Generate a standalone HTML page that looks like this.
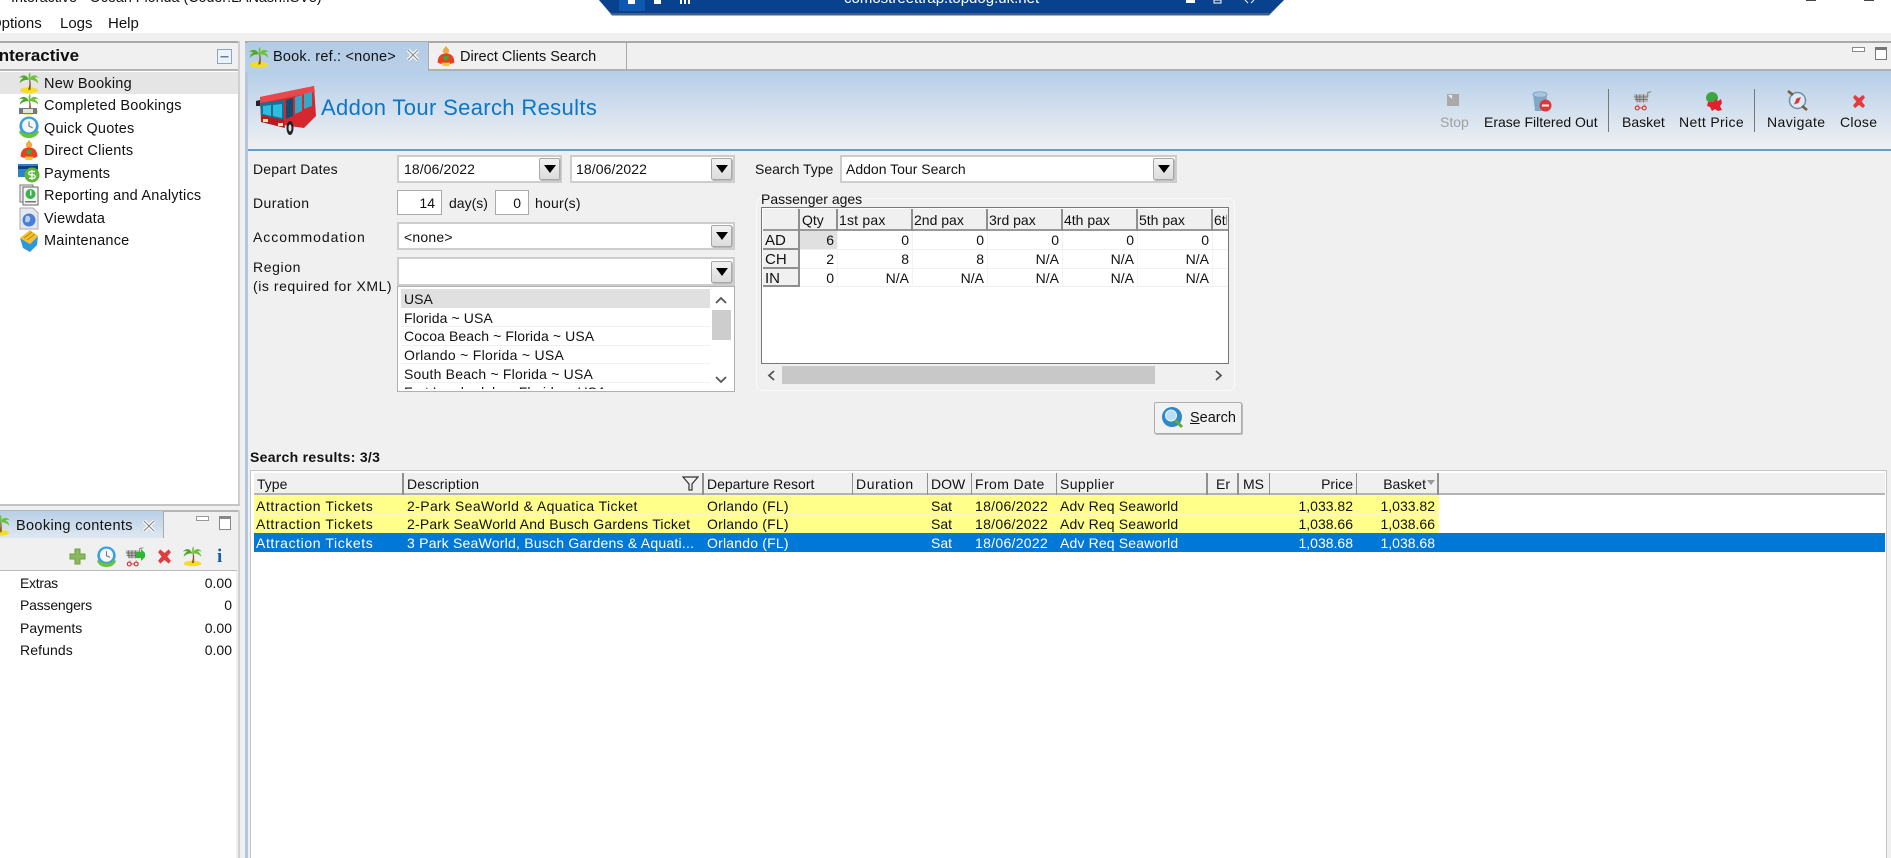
<!DOCTYPE html>
<html><head><meta charset="utf-8"><title>Interactive</title>
<style>
html,body{margin:0;padding:0;background:#fff}
#p{position:relative;width:1891px;height:858px;overflow:hidden;background:#f0f0f0;font:14px/18px "Liberation Sans",sans-serif;color:#111;filter:blur(.35px)}
#p div,#p svg,#p span.t{position:absolute}
.t{white-space:nowrap;position:absolute}
.r{transform:translateX(-100%)}
.n{font-size:14.5px;letter-spacing:.22px}
.c{background:#fff;border:2px solid #cdcdcd;box-sizing:border-box}
.b{background:linear-gradient(#f2f2f2,#dcdcdc);border:1px solid #a8a8a8;border-radius:2px;box-sizing:border-box;box-shadow:1px 1px 0 #bbb}
.b:after{content:"";position:absolute;left:4px;top:6px;border:6px solid transparent;border-top:8px solid #000;border-bottom:0}
.h{background:#f0f0f0;border-right:2px solid #8f8f8f;border-bottom:2px solid #8f8f8f;box-sizing:border-box}
.s{width:1.5px;height:22px;top:473px;background:#909090}
.ps{width:1.5px;height:22px;top:209px;background:#8f8f8f}
.pv{width:1px;height:56px;top:231px;background:#f3f3f3}
.a{letter-spacing:.6px}.d1{letter-spacing:.4px}.d2{letter-spacing:.2px}.d3{letter-spacing:.23px}.o{letter-spacing:.2px}.f{letter-spacing:.3px}.q{letter-spacing:.15px}
.w{color:#fff}
</style></head><body>
<svg width="0" height="0" style="position:absolute">
<defs>
<symbol id="palm" viewBox="0 0 24 24"><ellipse cx="12" cy="20.500" rx="10" ry="3.200" fill="#f5dc28"/><path d="M12 9c1 4 0 8-1 11h2.600c.6-4 .6-8-.4-11z" fill="#8a5a22"/><path d="M12 9C9 3 5 3 1 7c3-1 4-.5 5 0-2 1-4 3-4 6 2-3 6-4 10-4z" fill="#4fa82b"/><path d="M12 9c3-6 7-6 11-2-3-1-4-.5-5 0 2 1 4 3 4 6-2-3-6-4-10-4zM12 9c-1-4 0-7 1-8 1 2 1 5-1 8z" fill="#6cc03a"/></symbol>
<symbol id="person" viewBox="0 0 24 24"><circle cx="12" cy="6" r="3.800" fill="#f0a848"/><path d="M12 0l2.500 3.500h-5z" fill="#e8a52c"/><path d="M2 20c0-7 3-11 10-11s10 4 10 11c-4 2.500-16 2.500-20 0z" fill="#ee3d20"/><rect x="9" y="12" width="6" height="5" fill="#3fa53c"/><path d="M7 20h10l-1 4H8z" fill="#f3c63a"/></symbol>
<symbol id="clock" viewBox="0 0 24 24"><circle cx="12" cy="11" r="10.500" fill="#3aa0e0"/><circle cx="12" cy="10.500" r="7.500" fill="#f6f6f6"/><path d="M12 6v5l4 2" stroke="#777" fill="none" stroke-width="1.200"/><path d="M3 16c4 5 14 5 18 0l2 1c-2 5-6 7-11 7s-9-2-11-7z" fill="#67c23c"/></symbol>
<symbol id="x" viewBox="0 0 24 24"><path d="M3 6l3-4 6 5 6-5 3 4-5 6 5 6-3 4-6-5-6 5-3-4 5-6z" fill="#e33b3e"/></symbol>
<symbol id="cart" viewBox="0 0 24 24"><path d="M2 5h16v9H5z" fill="#b5b5b5"/><path d="M5 5l1 9M9 5v9M13 5v9M2 8h16M3 11h15" stroke="#666" fill="none" stroke-width=".9"/><path d="M18 8V3l4-1" stroke="#888" fill="none" stroke-width="1.300"/><path d="M7 16v2M14 16v2" stroke="#aaa"/><circle cx="6" cy="20.500" r="2.200" fill="none" stroke="#d83030" stroke-width="1.300"/><circle cx="14" cy="20.500" r="2.200" fill="none" stroke="#d83030" stroke-width="1.300"/><path d="M8 20.500h4" stroke="#d83030"/></symbol>
</defs>
</svg>
<div id="p">
<!-- top -->
<div style="left:0;top:0;width:1891px;height:33px;background:#fff"></div>
<span class="t" style="left:11px;top:-11px;font-size:14.3px">Interactive - Ocean Florida (Coder:LANash:ISV5)</span>
<span class="t" style="left:-10px;top:15px;font-size:15px">Options</span>
<span class="t" style="left:60px;top:15px;font-size:15px">Logs</span>
<span class="t" style="left:108px;top:15px;font-size:15px">Help</span>
<svg style="left:590px;top:0" width="710" height="17"><path d="M9 0L22 15.500H679L694 0z" fill="#3c5f8c"/><path d="M9 0L21 13H680L694 0z" fill="#08428f"/><rect x="29" y="0" width="26" height="11" fill="#0f58b0"/><rect x="38" y="0" width="7" height="4" fill="#fff"/><rect x="64" y="0" width="7" height="4" fill="#fff"/><rect x="90" y="0" width="2" height="4" fill="#fff"/><rect x="94" y="0" width="2" height="4" fill="#fff"/><rect x="98" y="0" width="2" height="4" fill="#fff"/><rect x="596" y="0" width="9" height="3" fill="#fff"/><rect x="624" y="0" width="7" height="3" fill="none" stroke="#fff"/><path d="M655 0l3 3M664 0l-3 3" stroke="#fff"/></svg>
<span class="t" style="left:844px;top:-10px;font-size:15px;color:#fff">comostreettrap.topdog.uk.net</span>
<div style="left:1806px;top:0;width:10px;height:1px;background:#444"></div>
<div style="left:1864px;top:0;width:10px;height:1px;background:#444"></div>

<!-- left panel -->
<div style="left:0;top:41px;width:239px;height:2px;background:#a9a9a9"></div>
<div style="left:0;top:43px;width:238px;height:26px;background:#f0f0f0;border-bottom:2px solid #b5b5b5"></div>
<span class="t" style="left:-6px;top:46.5px;font-size:17px;font-weight:bold">Interactive</span>
<svg style="left:216px;top:48px" width="17" height="17"><rect x="1.500" y="1.500" width="14" height="14" fill="#eef2f8" stroke="#8aa6c6"/><rect x="4.500" y="8" width="8" height="1.500" fill="#5a7fae"/></svg>
<div style="left:0;top:71px;width:238px;height:433px;background:#fff"></div>
<div style="left:238px;top:41px;width:1.500px;height:465px;background:#cfcfcf"></div>
<div style="left:0;top:504px;width:239.500px;height:2px;background:#c4c4c4"></div>
<div style="left:0;top:72px;width:238px;height:22px;background:#e5e5e5"></div>
<svg style="left:18px;top:71px" width="22" height="23"><use href="#palm"/></svg>
<svg style="left:18px;top:93px" width="22" height="22"><use href="#palm"/><rect x="1" y="15" width="18" height="6" fill="#777"/><rect x="5" y="16" width="10" height="4" fill="#e2e2e2"/></svg>
<svg style="left:18px;top:116px" width="22" height="22"><use href="#clock"/></svg>
<svg style="left:19px;top:139px" width="20" height="22"><use href="#person"/></svg>
<svg style="left:18px;top:162px" width="22" height="22"><rect x="0" y="2" width="20" height="13" fill="#2d83c8"/><rect x="0" y="4" width="20" height="3" fill="#123f78"/><circle cx="14" cy="13" r="7.500" fill="#5fb53a"/><path d="M17 9.500h-4.500a1.700 1.700 0 000 3.400h3a1.700 1.700 0 010 3.400H11M14 8v10" stroke="#fff" fill="none" stroke-width="1.300"/></svg>
<svg style="left:19px;top:184px" width="20" height="22"><rect x="1" y="1" width="13" height="17" fill="#eee" stroke="#777"/><rect x="4" y="3" width="15" height="18" fill="#f5f5f5" stroke="#666"/><circle cx="11.500" cy="10" r="5" fill="#38b548"/><rect x="11" y="6.500" width="1.400" height="5" fill="#fff"/><rect x="6" y="17" width="11" height="1.500" fill="#777"/></svg>
<svg style="left:19px;top:207px" width="20" height="23"><path d="M1 1h13l5 5v16H1z" fill="#e6e8ee" stroke="#a8a8b4"/><circle cx="10" cy="13" r="6.500" fill="#4a7fd8"/><path d="M7 9c3-1 5 1 4 4s-4 3-5 1z" fill="#b4d0f4"/></svg>
<svg style="left:19px;top:229px" width="20" height="23"><path d="M1 9l3 10 7 4 7-7 1-9-8 8z" fill="#2c98d8"/><path d="M1 9l10-8 8 6-8 8z" fill="#f4c02e"/><path d="M5 9l8-6M8 11l8-6" stroke="#b8861a"/></svg>
<span class="t n" style="left:44px;top:75px">New Booking</span>
<span class="t n" style="left:44px;top:97px">Completed Bookings</span>
<span class="t n" style="left:44px;top:119.5px">Quick Quotes</span>
<span class="t n" style="left:44px;top:142px">Direct Clients</span>
<span class="t n" style="left:44px;top:164.5px">Payments</span>
<span class="t n" style="left:44px;top:187px">Reporting and Analytics</span>
<span class="t n" style="left:44px;top:209.5px">Viewdata</span>
<span class="t n" style="left:44px;top:232px">Maintenance</span>

<!-- booking contents -->
<div style="left:0;top:510px;width:239px;height:348px;background:#f0f0f0"></div>
<div style="left:0;top:510px;width:239px;height:1.500px;background:#b5b5b5"></div>
<div style="left:238px;top:510px;width:1.500px;height:348px;background:#cfcfd6"></div>
<div style="left:0;top:511px;width:163px;height:27px;background:linear-gradient(#b8cfe6,#dfe8f2);border-right:1px solid #aaa"></div>
<div style="left:0;top:538px;width:237px;height:32px;background:#f0f0f0;border-bottom:1px solid #bbb"></div>
<svg style="left:0;top:514px" width="11" height="22"><use href="#palm" x="-11" width="22" height="22"/></svg>
<span class="t" style="left:16px;top:517px;font-size:14.5px;letter-spacing:.35px">Booking contents</span>
<svg style="left:142px;top:519px" width="14" height="14"><path d="M2 2l10 10M12 2L2 12" stroke="#fff" stroke-width="3.500"/><path d="M2 2l10 10M12 2L2 12" stroke="#888" stroke-width="1.200"/></svg>
<div style="left:196px;top:516px;width:11px;height:3px;border:1px solid #999;background:#fff"></div>
<div style="left:219px;top:516px;width:10px;height:10px;border:1px solid #888;border-top-width:3px;background:#fff"></div>
<svg style="left:69px;top:548px" width="17" height="17"><path d="M6 1h5v5h5v5h-5v5H6v-5H1V6h5z" fill="#8cb85c" stroke="#6d9f4a"/></svg>
<svg style="left:96px;top:546px" width="21" height="21"><use href="#clock"/></svg>
<svg style="left:124px;top:546px" width="21" height="21"><use href="#cart"/><path d="M12 6h5V3l6 6-6 6v-3h-5z" fill="#2fb52f"/></svg>
<svg style="left:156px;top:548px" width="17" height="17"><use href="#x"/></svg>
<svg style="left:182px;top:545px" width="21" height="22"><use href="#palm"/></svg>
<span class="t" style="left:217px;top:547px;font:bold 19px/20px 'Liberation Serif',serif;color:#1a5ca8">i</span>
<div style="left:0;top:571px;width:236px;height:287px;background:#fff"></div>
<span class="t" style="left:20px;top:573.5px;letter-spacing:-.3px">Extras</span><span class="t r" style="left:232px;top:573.5px">0.00</span>
<span class="t" style="left:20px;top:596px;letter-spacing:-.2px">Passengers</span><span class="t r" style="left:232px;top:596px">0</span>
<span class="t" style="left:20px;top:618.5px">Payments</span><span class="t r" style="left:232px;top:618.5px">0.00</span>
<span class="t" style="left:20px;top:641px;letter-spacing:.1px">Refunds</span><span class="t r" style="left:232px;top:641px">0.00</span>

<!-- editor -->
<div style="left:245px;top:41px;width:1646px;height:2px;background:#a9a9a9"></div>
<div style="left:245px;top:69px;width:1646px;height:2px;background:#b0b0b0"></div>
<div style="left:245px;top:43px;width:3px;height:815px;background:#b4c6dc"></div>
<div style="left:245px;top:42px;width:183px;height:30px;background:linear-gradient(#b2cbe6,#bad0e8);border-radius:5px 0 0 0"></div>
<div style="left:428px;top:42px;width:1px;height:28px;background:#aaa"></div>
<div style="left:626px;top:42px;width:1px;height:28px;background:#aaa"></div>
<svg style="left:248px;top:45px" width="22" height="24"><use href="#palm"/></svg>
<span class="t" style="left:273px;top:48px;font-size:14.5px;letter-spacing:.2px">Book. ref.: &lt;none&gt;</span>
<svg style="left:406px;top:48px" width="14" height="14"><path d="M2 2l10 10M12 2L2 12" stroke="#fff" stroke-width="3.500"/><path d="M2 2l10 10M12 2L2 12" stroke="#888" stroke-width="1.200"/></svg>
<svg style="left:436px;top:45px" width="20" height="22"><use href="#person"/></svg>
<span class="t" style="left:460px;top:48px;font-size:14.5px">Direct Clients Search</span>
<div style="left:1852px;top:47px;width:11px;height:3px;border:1px solid #888;background:#fff"></div>
<div style="left:1875px;top:47px;width:10px;height:9px;border:1px solid #777;border-top-width:3px;background:#fff"></div>

<div style="left:248px;top:71px;width:1643px;height:78px;background:linear-gradient(#b5cee8,#f0f1f3)"></div>
<div style="left:248px;top:149px;width:1643px;height:2px;background:#659fc8"></div>
<svg style="left:254px;top:84px" width="63" height="52" viewBox="0 0 63 52">
<path d="M6 13L60 2l2 30-12 12L7 38z" fill="#d5272e"/><path d="M6 13L60 2l1 6L7 19z" fill="#e8484c"/>
<path d="M6 19l24-3v20L7 31z" fill="#1b6f96"/><path d="M9 22l8-1v11l-8-2zM19 21l9-1v14l-9-2z" fill="#2bbede"/><path d="M32 16l7-2v18l-7 3z" fill="#124d70"/><path d="M41 13l7-2v16l-7 3zM50 10l8-2v14l-8 3z" fill="#35a8c8"/>
<path d="M7 31l23 5 1 8-24-6z" fill="#b51c22"/><rect x="9" y="35" width="5" height="3" fill="#f1e6b0"/><rect x="24" y="39" width="5" height="3" fill="#f1e6b0"/>
<ellipse cx="36" cy="44" rx="3.500" ry="7" fill="#222"/><ellipse cx="36" cy="44" rx="1.500" ry="3.500" fill="#ddd"/><path d="M2 17l4-1v6H2z" fill="#222"/></svg>
<span class="t" style="left:321px;top:96px;font-size:22px;line-height:24px;color:#0c76c6;letter-spacing:.35px">Addon Tour Search Results</span>

<!-- toolbar -->
<svg style="left:1447px;top:94px" width="12" height="12"><rect width="12" height="12" fill="#a9a9a9"/><path d="M1 1h4v4z" fill="#eee"/></svg>
<span class="t" style="left:1440px;top:113px;color:#a0a0a0">Stop</span>
<svg style="left:1532px;top:91px" width="20" height="21"><path d="M1 3h14l-1 17H3z" fill="#7fa8c8"/><ellipse cx="8" cy="3.500" rx="7" ry="2.800" fill="#a9c6da" stroke="#7fa8c8"/><circle cx="13.500" cy="14.500" r="6" fill="#d83a3a"/><rect x="10" y="13.500" width="7" height="2" fill="#fff"/></svg>
<span class="t" style="left:1484px;top:113px">Erase Filtered Out</span>
<div style="left:1608px;top:89px;width:1px;height:43px;background:#777"></div>
<svg style="left:1632px;top:90px" width="21" height="21"><use href="#cart"/></svg>
<span class="t" style="left:1622px;top:113px">Basket</span>
<svg style="left:1701px;top:90px" width="21" height="21"><path d="M5 8a6 6 0 0112 0c0 4-6 6-6 6S5 12 5 8z" fill="#3fa544"/><path d="M7 12h6l1-3 3 2 3-2 1 4-2 3 2 4-4 1-3-2-3 2-2-4-3-1z" fill="#e3202c"/></svg>
<span class="t" style="left:1679px;top:113px;letter-spacing:.35px">Nett Price</span>
<div style="left:1754px;top:89px;width:1px;height:43px;background:#777"></div>
<svg style="left:1787px;top:90px" width="21" height="21"><circle cx="10.500" cy="10.500" r="8" fill="#dfeaf3" stroke="#6d8ca8" stroke-width="1.500"/><path d="M14 7l-2.500 6L7 14.500 9.500 8.500z" fill="#d8383a"/><path d="M1 1l5 4M20 20l-5-4" stroke="#7a5a38" stroke-width="2.500"/></svg>
<span class="t" style="left:1767px;top:113px;letter-spacing:.4px">Navigate</span>
<svg style="left:1851px;top:93px" width="16" height="17"><use href="#x"/></svg>
<span class="t" style="left:1840px;top:113px;letter-spacing:.3px">Close</span>

<!-- form -->
<span class="t" style="left:253px;top:160px;letter-spacing:.2px">Depart Dates</span>
<div class="c" style="left:397px;top:155px;width:165px;height:28px"></div><span class="t" style="left:404px;top:160px;letter-spacing:.1px">18/06/2022</span><div class="b" style="left:539px;top:158px;width:21px;height:22px"></div>
<div class="c" style="left:570px;top:155px;width:165px;height:28px"></div><span class="t" style="left:576px;top:160px;letter-spacing:.1px">18/06/2022</span><div class="b" style="left:711px;top:158px;width:21px;height:22px"></div>
<span class="t" style="left:755px;top:160px">Search Type</span>
<div class="c" style="left:840px;top:155px;width:337px;height:28px"></div><span class="t" style="left:846px;top:160px">Addon Tour Search</span><div class="b" style="left:1153px;top:158px;width:21px;height:22px"></div>

<span class="t" style="left:253px;top:194px;letter-spacing:.45px">Duration</span>
<div class="c" style="left:397px;top:190px;width:45px;height:25px;border-color:#aaa;border-width:1.500px"></div><span class="t r" style="left:435px;top:194px">14</span>
<span class="t" style="left:449px;top:194px">day(s)</span>
<div class="c" style="left:495px;top:190px;width:34px;height:25px;border-color:#aaa;border-width:1.500px"></div><span class="t r" style="left:521px;top:194px">0</span>
<span class="t" style="left:535px;top:194px;letter-spacing:.2px">hour(s)</span>

<span class="t" style="left:253px;top:228px;letter-spacing:.95px">Accommodation</span>
<div class="c" style="left:397px;top:222px;width:338px;height:28px"></div><span class="t" style="left:404px;top:228px;letter-spacing:.2px">&lt;none&gt;</span><div class="b" style="left:711px;top:225px;width:21px;height:22px"></div>

<span class="t" style="left:253px;top:258px;letter-spacing:.6px">Region</span>
<span class="t" style="left:253px;top:277px;letter-spacing:.55px">(is required for XML)</span>
<div class="c" style="left:397px;top:257px;width:338px;height:29px"></div><div class="b" style="left:711px;top:261px;width:21px;height:22px"></div>
<div style="left:397px;top:286px;width:338px;height:106px;background:#fff;border:1.500px solid #b0b0b0;box-sizing:border-box;overflow:hidden">
<div style="left:3px;top:2px;width:309px;height:19px;background:#e0e0e0"></div>
<div style="left:3px;top:39px;width:309px;height:1px;background:#f0f0f0"></div>
<div style="left:3px;top:58px;width:309px;height:1px;background:#f0f0f0"></div>
<div style="left:3px;top:76px;width:309px;height:1px;background:#f0f0f0"></div>
<div style="left:3px;top:95px;width:309px;height:1px;background:#f0f0f0"></div>
<span class="t" style="left:6px;top:3px">USA</span>
<span class="t" style="left:6px;top:22px;letter-spacing:.1px">Florida ~ USA</span>
<span class="t" style="left:6px;top:40px;letter-spacing:.1px">Cocoa Beach ~ Florida ~ USA</span>
<span class="t" style="left:6px;top:59px;letter-spacing:.3px">Orlando ~ Florida ~ USA</span>
<span class="t" style="left:6px;top:78px;letter-spacing:.2px">South Beach ~ Florida ~ USA</span>
<span class="t" style="left:6px;top:95.5px">Fort Lauderdale ~ Florida ~ USA</span>
<div style="left:0;top:102px;width:335px;height:2px;background:#fff"></div>
<div style="left:313px;top:0;width:22px;height:104px;background:#fff"></div>
<div style="left:314px;top:23px;width:19px;height:30px;background:#cdcdcd"></div>
<svg style="left:316px;top:9px" width="14" height="9"><path d="M2 7l5-5 5 5" fill="none" stroke="#555" stroke-width="1.800"/></svg>
<svg style="left:316px;top:88px" width="14" height="9"><path d="M2 2l5 5 5-5" fill="none" stroke="#555" stroke-width="1.800"/></svg>
</div>

<!-- passenger ages -->
<div style="left:756px;top:198px;width:479px;height:193px;border:1.500px solid #fafafa;border-radius:6px;box-sizing:border-box"></div>
<span class="t" style="left:761px;top:191px;background:#f0f0f0;line-height:17px;height:14px">Passenger ages</span>
<div style="left:761px;top:207px;width:468px;height:157px;background:#fff;border:1.500px solid #777;box-sizing:border-box"></div>
<div style="left:763px;top:209px;width:465px;height:22px;background:#f0f0f0;border-bottom:2px solid #999;box-sizing:border-box"></div>
<div class="ps" style="left:798px;width:2px"></div>
<div class="ps" style="left:836px"></div><div class="ps" style="left:911px"></div><div class="ps" style="left:986px"></div><div class="ps" style="left:1061px"></div><div class="ps" style="left:1136px"></div><div class="ps" style="left:1211px"></div>
<div class="h" style="left:763px;top:231px;width:37px;height:19px"></div>
<div class="h" style="left:763px;top:250px;width:37px;height:18.5px"></div>
<div class="h" style="left:763px;top:268.5px;width:37px;height:18.5px"></div>
<div style="left:800px;top:231px;width:36.500px;height:18px;background:#e0e0e0"></div>
<div style="left:800px;top:249px;width:428px;height:1px;background:#f0f0f0"></div>
<div style="left:800px;top:268px;width:428px;height:1px;background:#f0f0f0"></div>
<div style="left:800px;top:286px;width:428px;height:1px;background:#f0f0f0"></div>
<div class="pv" style="left:836.5px"></div><div class="pv" style="left:911.5px"></div><div class="pv" style="left:986.5px"></div><div class="pv" style="left:1061.5px"></div><div class="pv" style="left:1136.5px"></div><div class="pv" style="left:1211.5px"></div>
<span class="t" style="left:802px;top:211px">Qty</span><span class="t" style="left:839px;top:211px;letter-spacing:.2px">1st pax</span><span class="t" style="left:914px;top:211px">2nd pax</span><span class="t" style="left:989px;top:211px">3rd pax</span><span class="t" style="left:1064px;top:211px">4th pax</span><span class="t" style="left:1139px;top:211px">5th pax</span><span class="t" style="left:1214px;top:211px;width:13px;overflow:hidden">6th pax</span>
<span class="t" style="left:765px;top:232px;font-size:15px">AD</span><span class="t" style="left:765px;top:251px;font-size:15px">CH</span><span class="t" style="left:765px;top:269.5px;font-size:15px">IN</span>
<span class="t r" style="left:834px;top:231px">6</span><span class="t r" style="left:909px;top:231px">0</span><span class="t r" style="left:984px;top:231px">0</span><span class="t r" style="left:1059px;top:231px">0</span><span class="t r" style="left:1134px;top:231px">0</span><span class="t r" style="left:1209px;top:231px">0</span>
<span class="t r" style="left:834px;top:250px">2</span><span class="t r" style="left:909px;top:250px">8</span><span class="t r" style="left:984px;top:250px">8</span><span class="t r" style="left:1059px;top:250px">N/A</span><span class="t r" style="left:1134px;top:250px">N/A</span><span class="t r" style="left:1209px;top:250px">N/A</span>
<span class="t r" style="left:834px;top:268.5px">0</span><span class="t r" style="left:909px;top:268.5px">N/A</span><span class="t r" style="left:984px;top:268.5px">N/A</span><span class="t r" style="left:1059px;top:268.5px">N/A</span><span class="t r" style="left:1134px;top:268.5px">N/A</span><span class="t r" style="left:1209px;top:268.5px">N/A</span>
<div style="left:782px;top:366px;width:373px;height:18px;background:#c8c8c8"></div>
<svg style="left:766px;top:369px" width="10" height="13"><path d="M8 2L3 6.500 8 11" fill="none" stroke="#555" stroke-width="1.800"/></svg>
<svg style="left:1214px;top:369px" width="10" height="13"><path d="M2 2l5 4.500L2 11" fill="none" stroke="#555" stroke-width="1.800"/></svg>

<!-- search btn -->
<div style="left:1154px;top:402px;width:88px;height:32px;background:#f2f2f2;border:1px solid #adadad;border-radius:2px;box-sizing:border-box;box-shadow:1px 1px 0 #bbb"></div>
<svg style="left:1161px;top:406px" width="24" height="23"><circle cx="11" cy="11" r="10" fill="#2f88c8"/><circle cx="10" cy="9.500" r="5.500" fill="#b9dff2" stroke="#e8f4fa"/><path d="M14 14l7 7" stroke="#6aa53a" stroke-width="3"/></svg>
<span class="t" style="left:1190px;top:409px;font-size:14.5px"><u>S</u>earch</span>

<!-- results -->
<span class="t" style="left:250px;top:448px;font-weight:bold;font-size:14px;letter-spacing:.3px">Search results: 3/3</span>
<div style="left:250px;top:470px;width:1637px;height:388px;background:#fff;border:1.500px solid #c6c6c6;border-bottom:0;box-sizing:border-box"></div>
<div style="left:254px;top:473px;width:1631px;height:22px;background:#f0f0f0;border-bottom:2px solid #b4b4b4;box-sizing:border-box"></div>
<div style="left:254px;top:494.5px;width:1184.500px;height:38.5px;background:#ffff8a"></div>
<div style="left:254px;top:514px;width:1184.500px;height:1px;background:#f6f6c8"></div>
<div style="left:254px;top:533px;width:1631px;height:19px;background:#0078d7"></div>
<div class="s" style="left:402px"></div><div class="s" style="left:702px"></div><div class="s" style="left:851.5px"></div><div class="s" style="left:926.5px"></div><div class="s" style="left:970.5px"></div><div class="s" style="left:1055.5px"></div><div class="s" style="left:1206px"></div><div class="s" style="left:1237px"></div><div class="s" style="left:1268.5px"></div><div class="s" style="left:1355.5px"></div><div class="s" style="left:1437px"></div>
<span class="t" style="left:257px;top:475px">Type</span><span class="t" style="left:407px;top:475px;letter-spacing:.2px">Description</span><span class="t" style="left:707px;top:475px">Departure Resort</span><span class="t" style="left:856px;top:475px;letter-spacing:.6px">Duration</span><span class="t" style="left:931px;top:475px">DOW</span><span class="t" style="left:975px;top:475px;letter-spacing:.4px">From Date</span><span class="t" style="left:1060px;top:475px;letter-spacing:.4px">Supplier</span><span class="t" style="left:1216px;top:475px">Er</span><span class="t" style="left:1243px;top:475px">MS</span><span class="t r" style="left:1353px;top:475px">Price</span><span class="t r" style="left:1426px;top:475px">Basket</span>
<svg style="left:682px;top:476px" width="17" height="15"><path d="M1 1h15l-6 7v6H7V8z" fill="none" stroke="#333" stroke-width="1.200"/></svg>
<svg style="left:1426px;top:480px" width="10" height="6"><path d="M1 0h8L5 5z" fill="#999"/></svg>
<span class="t a" style="left:256px;top:497px">Attraction Tickets</span><span class="t d1" style="left:407px;top:497px">2-Park SeaWorld &amp; Aquatica Ticket</span><span class="t o" style="left:707px;top:497px">Orlando (FL)</span><span class="t" style="left:931px;top:497px">Sat</span><span class="t f" style="left:975px;top:497px">18/06/2022</span><span class="t q" style="left:1060px;top:497px">Adv Req Seaworld</span><span class="t r" style="left:1353px;top:497px">1,033.82</span><span class="t r" style="left:1435px;top:497px">1,033.82</span>
<span class="t a" style="left:256px;top:515px">Attraction Tickets</span><span class="t d2" style="left:407px;top:515px">2-Park SeaWorld And Busch Gardens Ticket</span><span class="t o" style="left:707px;top:515px">Orlando (FL)</span><span class="t" style="left:931px;top:515px">Sat</span><span class="t f" style="left:975px;top:515px">18/06/2022</span><span class="t q" style="left:1060px;top:515px">Adv Req Seaworld</span><span class="t r" style="left:1353px;top:515px">1,038.66</span><span class="t r" style="left:1435px;top:515px">1,038.66</span>
<span class="t a w" style="left:256px;top:534px">Attraction Tickets</span><span class="t d3 w" style="left:407px;top:534px">3 Park SeaWorld, Busch Gardens &amp; Aquati...</span><span class="t o w" style="left:707px;top:534px">Orlando (FL)</span><span class="t w" style="left:931px;top:534px">Sat</span><span class="t f w" style="left:975px;top:534px">18/06/2022</span><span class="t q w" style="left:1060px;top:534px">Adv Req Seaworld</span><span class="t r w" style="left:1353px;top:534px">1,038.68</span><span class="t r w" style="left:1435px;top:534px">1,038.68</span>
</div>
</body></html>
